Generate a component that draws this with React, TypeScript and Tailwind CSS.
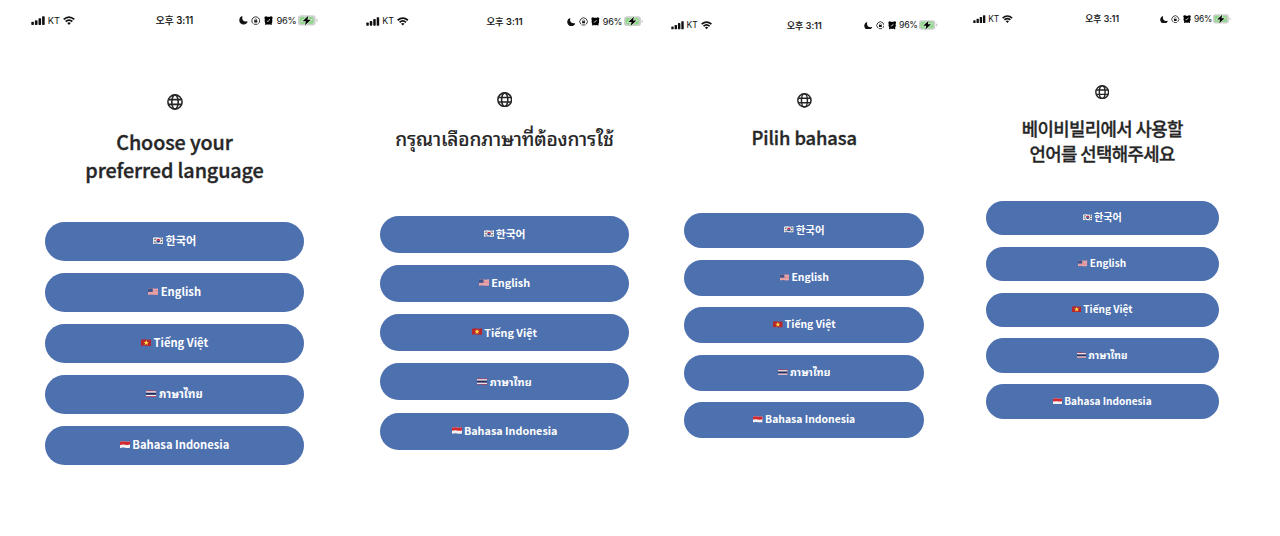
import React from 'react';
import clsx from 'clsx';

// Every measure inside a phone is in em, so the font size on the phone sets its scale.
const phones = [
  { id: 'en', title: ['Choose your', 'preferred language'], frame: 'ml-[31px] pt-[14.6px] text-[10px]', titleStyle: 'tracking-[-0.011em] [-webkit-text-stroke:0.35px_#262626]' },
  { id: 'th', title: ['กรุณาเลือกภาษาที่ต้องการใช้'], frame: 'ml-[48.2px] pt-[15.9px] text-[9.64px]', titleStyle: 'relative -top-px tracking-[-0.016em] [-webkit-text-stroke:0.1px_#262626]' },
  { id: 'id', title: ['Pilih bahasa'], frame: 'ml-[28.1px] pt-[19.9px] text-[9.29px]', titleStyle: 'relative -top-px tracking-[-0.011em] [-webkit-text-stroke:0.35px_#262626]' },
  { id: 'ko', title: ['베이비빌리에서 사용할', '언어를 선택해주세요'], frame: 'ml-[35.5px] pt-[14px] text-[9px]', titleStyle: 'tracking-[-0.07em] [-webkit-text-stroke:0.3px_#262626]' },
];

const languages = [
  { code: 'kr', label: '한국어' },
  { code: 'us', label: 'English' },
  { code: 'vn', label: 'Tiếng Việt' },
  { code: 'th', label: 'ภาษาไทย' },
  { code: 'id', label: 'Bahasa Indonesia' },
];

const Flag = ({ code }: { code: string }) => {
  const wave = 'M0 1.4 Q5 -0.4 10 1 T20 0.6 V12.6 Q15 14.2 10 13 T0 13.4 Z';
  const clip = React.useId();
  return (
    <svg viewBox="0 0 20 14" className="h-[0.74em] w-[1.05em] shrink-0">
      <clipPath id={clip}>
        <path d={wave} />
      </clipPath>
      <g clipPath={`url(#${clip})`}>
        {code === 'kr' && (
          <>
            <rect width="20" height="14" fill="#f2f2f4" />
            <path d="M6.2 7a3.8 3.8 0 0 1 7.6 0z" fill="#c8293f" />
            <path d="M6.2 7a3.8 3.8 0 0 0 7.6 0z" fill="#24458f" />
            <path d="M2 5l2.5-2.5M3 6l2.5-2.5M2 9l2.5 2.5M3 8l2.5 2.5M18 5l-2.5-2.5M17 6l-2.5-2.5M18 9l-2.5 2.5M17 8l-2.5 2.5" stroke="#222" strokeWidth="1.4" />
          </>
        )}
        {code === 'us' && (
          <>
            <rect width="20" height="14" fill="#efc5c8" />
            <path d="M0 1.5h20M0 4.3h20M0 7.1h20M0 9.9h20M0 12.7h20" stroke="#d8737b" strokeWidth="1.4" />
            <rect width="9" height="7.5" fill="#40538c" />
          </>
        )}
        {code === 'vn' && (
          <>
            <rect width="20" height="14" fill="#b8262b" />
            <path d="M10 2l1.4 3.5h3.7l-3 2.3 1.1 3.8L10 9.4l-3.2 2.2 1.1-3.8-3-2.3h3.7z" fill="#ffe14a" />
          </>
        )}
        {code === 'th' && (
          <>
            <rect width="20" height="14" fill="#b9384b" />
            <rect y="2.4" width="20" height="9.2" fill="#f6f3f7" />
            <rect y="5" width="20" height="4.2" fill="#252c5e" />
          </>
        )}
        {code === 'id' && (
          <>
            <rect width="20" height="14" fill="#f3f0f1" />
            <path d="M0 0h20v6.6Q15 8 10 7T0 7.4z" fill="#d3282f" />
          </>
        )}
      </g>
    </svg>
  );
};

const StatusBar = () => (
  <div className="grid h-[1.2em] grid-cols-[1fr_auto_1fr] items-center text-[#111]">
    <div className="flex items-center">
      <svg viewBox="0 0 14 9" className="h-[0.9em] w-[1.4em]" fill="currentColor">
        <rect x="0.3" y="5.8" width="2.6" height="3.2" rx="0.7" />
        <rect x="3.9" y="4.2" width="2.6" height="4.8" rx="0.7" />
        <rect x="7.5" y="2.2" width="2.6" height="6.8" rx="0.7" />
        <rect x="11.1" y="0.2" width="2.6" height="8.8" rx="0.7" />
      </svg>
      <span className="ml-[0.3em] w-[1.2em] whitespace-nowrap text-[0.93em] leading-none font-['Inter',sans-serif]">KT</span>
      <svg viewBox="0 0 12 9" className="ml-[0.4em] h-[0.9em] w-[1.2em]" fill="none" stroke="currentColor" strokeWidth="1.8">
        <path d="M0.7 3.4Q6 -1.2 11.3 3.4" />
        <path d="M2.7 5.5Q6 2.7 9.3 5.5" />
        <path d="M4.2 7Q6 5.5 7.8 7L6 8.9z" fill="currentColor" stroke="none" />
      </svg>
    </div>
    <span className="whitespace-nowrap text-[0.97em] leading-none font-medium [-webkit-text-stroke:0.15px] font-['Inter','Noto_Sans_CJK_KR',sans-serif]">오후 3:11</span>
    <div className="flex items-center justify-end">
      <svg viewBox="0 0 9 9" className="h-[0.85em] w-[0.85em]" fill="currentColor">
        <path d="M3 0.8A4 4 0 1 0 8.4 6.3 4.3 4.3 0 0 1 3 0.8z" stroke="currentColor" strokeWidth="1.3" strokeLinejoin="round" />
      </svg>
      <svg viewBox="0 0 10 10" className="ml-[0.35em] h-[0.95em] w-[0.95em]" fill="none" stroke="currentColor">
        <path d="M2.2 8A4.1 4.1 0 1 1 7.8 8M3.1 8.7h3.8" strokeWidth="0.9" />
        <path d="M4 5V4a1 1 0 0 1 2 0v1" strokeWidth="0.6" />
        <rect x="3.4" y="4.6" width="3.2" height="2.3" rx="0.4" fill="currentColor" stroke="none" />
      </svg>
      <svg viewBox="0 0 10 10" className="ml-[0.35em] h-[0.9em] w-[0.9em]">
        <circle cx="2.2" cy="2" r="1.8" />
        <circle cx="7.8" cy="2" r="1.8" />
        <circle cx="5" cy="5.2" r="4.3" />
        <path d="M1.6 9.6l1.5-2M8.4 9.6l-1.5-2" stroke="#000" strokeWidth="1.5" />
        <path d="M6.4 3.4L5 5.8H3.1" fill="none" stroke="#fff" strokeWidth="0.8" />
      </svg>
      <span className="ml-[0.35em] whitespace-nowrap text-[0.94em] leading-none tracking-[-0.03em] font-['Inter',sans-serif]">96%</span>
      <svg viewBox="0 0 20 11" className="ml-[0.15em] h-[1.1em] w-[2em]">
        <rect x="0" y="0.3" width="17.6" height="10.2" rx="3" fill="#cdcfcd" />
        <path d="M18.4 3.6q1.3 0.5 1.3 1.8t-1.3 1.8z" fill="#c4c4c4" />
        <rect x="1.8" y="2" width="13.6" height="6.8" rx="1.8" fill="#8bd986" />
        <path d="M10.3 0.7L4.5 6.2h3.4L6.9 10.2l6-5.5H9.4z" fill="#000" stroke="#d8ecd6" strokeWidth="1.6" paintOrder="stroke" />
      </svg>
    </div>
  </div>
);

const Globe = () => (
  <svg viewBox="0 0 16 16" className="mx-auto mt-[6.7em] h-[1.6em] w-[1.6em]" fill="none" stroke="#262626" strokeWidth="1.6">
    <circle cx="8" cy="8" r="7.1" />
    <ellipse cx="8" cy="8" rx="3.2" ry="7.1" />
    <path d="M1.5 5.6h13M1.5 10.4h13" />
  </svg>
);

const App = () => {
  return (
    <div className="flex h-[536px] w-[1280px] items-start overflow-hidden bg-white font-['Liberation_Sans','Noto_Sans_CJK_KR',sans-serif]">
      {phones.map((phone) => (
        <main key={phone.id} className={clsx('w-[28.7em] shrink-0 box-content', phone.frame)}>
          <StatusBar />
          <Globe />

          {/* Title, always two lines tall */}
          <h1
            className={clsx(
              "mt-[1.8em] h-[9.45em] text-center font-medium text-[#262626] font-['Noto_Sans_CJK_KR','Noto_Sans_Thai_Looped','Loma','Garuda','Noto_Sans_Thai',sans-serif]",
              phone.titleStyle,
            )}
          >
            {phone.title.map((line) => (
              <span key={line} className="block whitespace-nowrap text-[1.98em] leading-[1.44]">{line}</span>
            ))}
          </h1>

          {/* Languages */}
          <div className="mx-auto flex w-[25.85em] flex-col gap-[1.25em]">
            {languages.map((language) => (
              <button key={language.code} className="flex h-[3.85em] items-center justify-center rounded-full bg-[#4d70af] pb-[0.15em] text-white">
                <Flag code={language.code} />
                <span className="ml-[0.2em] whitespace-nowrap text-[1.12em] leading-none font-bold font-['Noto_Sans_CJK_KR','Noto_Sans_Thai_Looped','Loma','Garuda','Noto_Sans_Thai',sans-serif]">
                  {language.label}
                </span>
              </button>
            ))}
          </div>
        </main>
      ))}
    </div>
  );
};

export default App;
